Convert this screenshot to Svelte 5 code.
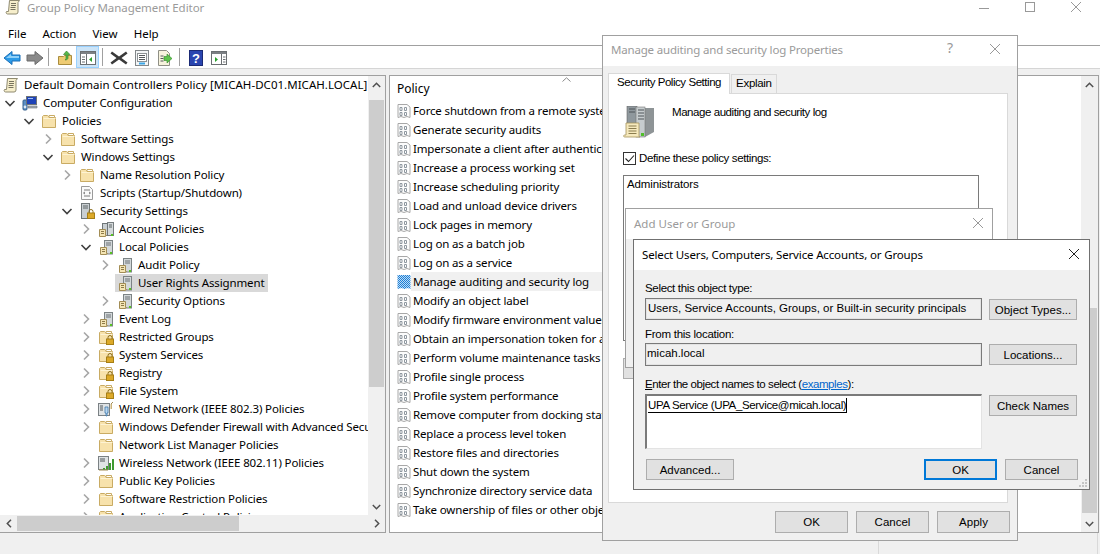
<script>
  const menus = ['File', 'Action', 'View', 'Help'];

  const tree = [
    { d: 0, c: 'open', i: 'computer', t: 'Computer Configuration' },
    { d: 1, c: 'open', i: 'folder', t: 'Policies' },
    { d: 2, c: 'closed', i: 'folder', t: 'Software Settings' },
    { d: 2, c: 'open', i: 'folder', t: 'Windows Settings' },
    { d: 3, c: 'closed', i: 'folder', t: 'Name Resolution Policy' },
    { d: 3, c: '', i: 'script', t: 'Scripts (Startup/Shutdown)' },
    { d: 3, c: 'open', i: 'security', t: 'Security Settings' },
    { d: 4, c: 'closed', i: 'servers', t: 'Account Policies' },
    { d: 4, c: 'open', i: 'server', t: 'Local Policies' },
    { d: 5, c: 'closed', i: 'server', t: 'Audit Policy' },
    { d: 5, c: '', i: 'server', t: 'User Rights Assignment', sel: true },
    { d: 5, c: 'closed', i: 'server', t: 'Security Options' },
    { d: 4, c: 'closed', i: 'server', t: 'Event Log' },
    { d: 4, c: 'closed', i: 'lockfolder', t: 'Restricted Groups' },
    { d: 4, c: 'closed', i: 'lockfolder', t: 'System Services' },
    { d: 4, c: 'closed', i: 'lockfolder', t: 'Registry' },
    { d: 4, c: 'closed', i: 'lockfolder', t: 'File System' },
    { d: 4, c: 'closed', i: 'wired', t: 'Wired Network (IEEE 802.3) Policies' },
    { d: 4, c: 'closed', i: 'folder', t: 'Windows Defender Firewall with Advanced Security' },
    { d: 4, c: '', i: 'folder', t: 'Network List Manager Policies' },
    { d: 4, c: 'closed', i: 'wireless', t: 'Wireless Network (IEEE 802.11) Policies' },
    { d: 4, c: 'closed', i: 'folder', t: 'Public Key Policies' },
    { d: 4, c: 'closed', i: 'folder', t: 'Software Restriction Policies' },
    { d: 4, c: 'closed', i: 'folder', t: 'Application Control Policies' }
  ];

  const policies = [
    'Force shutdown from a remote system',
    'Generate security audits',
    'Impersonate a client after authentication',
    'Increase a process working set',
    'Increase scheduling priority',
    'Load and unload device drivers',
    'Lock pages in memory',
    'Log on as a batch job',
    'Log on as a service',
    'Manage auditing and security log',
    'Modify an object label',
    'Modify firmware environment values',
    'Obtain an impersonation token for another user',
    'Perform volume maintenance tasks',
    'Profile single process',
    'Profile system performance',
    'Remove computer from docking station',
    'Replace a process level token',
    'Restore files and directories',
    'Shut down the system',
    'Synchronize directory service data',
    'Take ownership of files or other objects'
  ];
</script>

{#snippet lock()}
  <path d="M10 10V8.5a2 2 0 0 1 4 0V10" fill="none" stroke="#8a6d1c" />
  <rect x="8.5" y="10" width="7" height="5.5" fill="#dca928" stroke="#a67f16" />
{/snippet}

{#snippet folderShape()}
  <path d="M1.5 14.5V3.5l1-1h4l1 1h6l1 1v10z" fill="#f7e2ac" stroke="#c9ab63" />
  <path d="M8 2.5h5.5v2H8z" fill="#fff" stroke="#c9ab63" />
  <path d="M2.5 5.5h12" stroke="#fdf3d3" />
{/snippet}

{#snippet serverShape()}
  <rect x="6.5" y="1.5" width="8" height="13.5" fill="#d3d8da" stroke="#7c8385" />
  <path d="M8 4h5M8 6h5" stroke="#6a7174" />
  <rect x="12" y="13" width="2" height="2" fill="#58c322" />
  <path d="M2.5 8.5h6v6h1l-1 1h-6z" fill="#f4e5b5" stroke="#a38d55" />
  <path d="M4 10.5h3M4 12.5h3" stroke="#8d7a48" />
{/snippet}

{#snippet icon(kind)}
  <svg class="ico" viewBox="0 0 16 16" width="16" height="16">
    {#if kind === 'folder'}
      {@render folderShape()}
    {:else if kind === 'lockfolder'}
      {@render folderShape()}
      {@render lock()}
    {:else if kind === 'server'}
      {@render serverShape()}
    {:else if kind === 'servers'}
      <rect x="9.5" y="1.5" width="6" height="13" fill="#d5dadc" stroke="#777e80" />
      <path d="M11 4h3M11 6h3" stroke="#5d6467" />
      <rect x="13" y="13" width="2" height="2" fill="#58c322" />
      <rect x="4.5" y="2.5" width="5" height="12" fill="#c9cfd2" stroke="#6f7678" />
      <path d="M1.5 8.5h6v6h1l-1 1h-6z" fill="#f4e5b5" stroke="#a38d55" />
      <path d="M3 10.5h3M3 12.5h3" stroke="#8d7a48" />
    {:else if kind === 'security'}
      <rect x="2.5" y="0.5" width="8" height="15" fill="#c9cfd2" stroke="#6f7678" />
      <path d="M4 3h5M4 5h5" stroke="#5d6467" />
      {@render lock()}
    {:else if kind === 'computer'}
      <rect x="1" y="5" width="4" height="10" rx="1" fill="#5b8fc4" stroke="#36608c" />
      <rect x="4.5" y="1.5" width="10" height="8" fill="#1f43b8" stroke="#6d7378" />
      <path d="M6 3h5v1H6z" fill="#9fc0f5" />
      <path d="M6 11h9v2H6z" fill="#a4acb2" stroke="#6d7378" stroke-width=".6" />
      <circle cx="3" cy="12" r="1.4" fill="#dfe9f5" />
    {:else if kind === 'script'}
      <path d="M2.5 1.5h8l3 3v10h-11z" fill="#fafafa" stroke="#9b9b9b" />
      <path d="M5 5h6M4.5 8l1.5-1M4.5 8l1.5 1M11.5 8L10 7M11.5 8L10 9M5 11h6" stroke="#7a7a7a" fill="none" />
    {:else if kind === 'wired'}
      <rect x="0.5" y="2.5" width="11" height="12" fill="#dfe3e5" stroke="#7b8184" />
      <path d="M2 5h3M2 7h3M2 9h3" stroke="#50565a" />
      <path d="M7 6h3v6H9v3H8v-3H7z" fill="#b7d5ee" stroke="#2f6da5" stroke-width=".7" />
      <path d="M13 3l2-2" stroke="#a38d55" />
      <rect x="12.5" y="3" width="1.5" height="5" fill="#cbb37b" />
    {:else if kind === 'wireless'}
      <rect x="0.5" y="1.5" width="10" height="13" fill="#dfe3e5" stroke="#7b8184" />
      <path d="M2 4h5M2 6h5" stroke="#50565a" />
      <path d="M5 15v-2h2v2zM8 15v-4h2v4zM11 15V8h2v7zM14 15V4h2v11z" fill="#3f9a31" />
      <path d="M1 15h9" stroke="#a38d55" />
    {/if}
  </svg>
{/snippet}

{#snippet chevron(c)}
  <span class="chev">
    {#if c === 'open'}
      <svg viewBox="0 0 12 12" width="12" height="12"><path d="M1.5 4L6 8.5 10.5 4" fill="none" stroke="#404040" stroke-width="1.6" /></svg>
    {:else if c === 'closed'}
      <svg viewBox="0 0 12 12" width="12" height="12"><path d="M4 1.5L8.5 6 4 10.5" fill="none" stroke="#a6a6a6" stroke-width="1.6" /></svg>
    {/if}
  </span>
{/snippet}

{#snippet scroll()}
  <svg class="ico" viewBox="0 0 16 16" width="16" height="16">
    <path d="M4.5 1.5h10L13 3.500V13a2 2 0 0 1-2 2H2.500a1.500 1.500 0 0 1-1-2.500h2z" fill="#f6eecb" stroke="#8f8a70" />
    <path d="M6 4.500h5M6 6.500h5M5.500 8.500h5M5.500 10.500h5" stroke="#77735e" />
  </svg>
{/snippet}

{#snippet closeX(color)}
  <svg class="x" viewBox="0 0 12 12" width="12" height="12"><path d="M1 1l10 10M11 1L1 11" stroke={color} fill="none" /></svg>
{/snippet}

{#snippet arrowUp()}
  <span class="arrow"><svg viewBox="0 0 9 6" width="9" height="6"><path d="M.8 5l3.700-3.700L8.200 5" fill="none" stroke="#505050" stroke-width="1.5" /></svg></span>
{/snippet}

{#snippet arrowDown()}
  <span class="arrow"><svg viewBox="0 0 9 6" width="9" height="6"><path d="M.8 1l3.700 3.700L8.200 1" fill="none" stroke="#505050" stroke-width="1.5" /></svg></span>
{/snippet}

<div class="app">
  <header class="titlebar">
    <span class="appicon">{@render scroll()}</span>
    <span class="apptitle">Group Policy Management Editor</span>
    <div class="wincontrols">
      <svg viewBox="0 0 12 12" width="12" height="12"><path d="M1 7.500h10" stroke="#999" /></svg>
      <svg viewBox="0 0 12 12" width="12" height="12"><rect x="1.500" y="1.500" width="9" height="9" fill="none" stroke="#999" /></svg>
      {@render closeX('#999')}
    </div>
  </header>

  <nav class="menubar">
    {#each menus as m}<span>{m}</span>{/each}
  </nav>

  <div class="toolbar">
    <span class="tool">
      <svg viewBox="0 0 18 16" width="18" height="16"><path d="M9 1.500L1 8l8 6.500V11h8V5H9z" fill="#2d9be8" stroke="#1b6fb8" /><path d="M8 4L3 8h13V6H8z" fill="#8fd0f8" /></svg>
    </span>
    <span class="tool">
      <svg viewBox="0 0 18 16" width="18" height="16"><path d="M9 1.500L17 8l-8 6.500V11H1V5h8z" fill="#8a8a8a" stroke="#6a6a6a" /></svg>
    </span>
    <i class="sep first"></i>
    <span class="tool">
      <svg viewBox="0 0 16 16" width="16" height="16"><path d="M1.500 14.500v-8h5l1-1h7v9z" fill="#eecb73" stroke="#a98c3e" /><path d="M9.500 1L13 4.500h-2V8c0 1-1 2-3 2 1-1 1-1.500 1-2V4.500H6.500z" fill="#57b947" stroke="#2f7d28" stroke-width=".6" /></svg>
    </span>
    <span class="tool active">
      <svg viewBox="0 0 16 16" width="16" height="16"><rect x="0.500" y="1.500" width="15" height="13" fill="#fff" stroke="#6b6f72" /><path d="M1 2h14v2H1z" fill="#7c8084" /><path d="M6.500 4v10M2 7h3M2 9.500h3M2 12h3" stroke="#6b6f72" /><path d="M12 7v5L9 9.500z" fill="#2aa12c" /></svg>
    </span>
    <i class="sep"></i>
    <span class="tool">
      <svg viewBox="0 0 18 16" width="18" height="16"><path d="M2 1.500l7 5 7-5 1.500 2-6 4.500 6 4.500-1.500 2-7-5-7 5L.5 12.500l6-4.500-6-4.500z" fill="#3a3a3a" /></svg>
    </span>
    <span class="tool">
      <svg viewBox="0 0 16 16" width="16" height="16"><rect x="1.500" y="0.500" width="13" height="15" fill="#f3f5f6" stroke="#82878a" /><rect x="3.500" y="3.500" width="9" height="8" fill="#fff" stroke="#8d9295" /><path d="M5 5.500h6M5 7.500h6M5 9.500h6" stroke="#55595c" /><path d="M5 13.500h6" stroke="#3aa6e8" stroke-width="2" /></svg>
    </span>
    <span class="tool">
      <svg viewBox="0 0 16 16" width="16" height="16"><path d="M1.500 0.500h8l3 3v12h-11z" fill="#f7f3dd" stroke="#8f8f85" /><path d="M3.500 6h3M3.500 8.500h3M3.500 11h3" stroke="#55595c" /><path d="M10 4l5 4.500-5 4.500v-2.500H7v-4h3z" fill="#5ec24b" stroke="#2f8a2a" stroke-width=".6" /></svg>
    </span>
    <i class="sep"></i>
    <span class="tool">
      <svg viewBox="0 0 14 16" width="14" height="16"><rect x="0.500" y="0.500" width="13" height="15" fill="#2a45b0" stroke="#1b2a75" /><text x="7" y="13" font-size="13" font-weight="700" text-anchor="middle" fill="#fff" font-family="Liberation Sans, sans-serif">?</text></svg>
    </span>
    <span class="tool">
      <svg viewBox="0 0 16 16" width="16" height="16"><rect x="0.500" y="1.500" width="15" height="13" fill="#fff" stroke="#6b6f72" /><path d="M1 2h14v2H1z" fill="#7c8084" /><path d="M10.500 4v10M12 7h2.500M12 9.500h2.500M12 12h2.500" stroke="#6b6f72" /><path d="M4 7v5l3-2.500z" fill="#2aa12c" /></svg>
    </span>
  </div>

  <div class="panes">
    <section class="treepane">
      <div class="treemain">
        <div class="tree">
          <div class="row rootrow">
            {@render scroll()}
            <span class="label">Default Domain Controllers Policy [MICAH-DC01.MICAH.LOCAL]</span>
          </div>
          {#each tree as n}
            <div class="row" style="padding-left: {4 + n.d * 19}px">
              {@render chevron(n.c)}
              <span class="node" class:sel={n.sel}>
                {@render icon(n.i)}
                <span class="label">{n.t}</span>
              </span>
            </div>
          {/each}
        </div>
        <div class="vscroll">
          {@render arrowUp()}
          <div class="track tree-track"><div class="thumb"></div></div>
          {@render arrowDown()}
        </div>
      </div>
      <div class="hscroll">
        <span class="harrow"><svg viewBox="0 0 6 9" width="6" height="9"><path d="M5 .8L1.300 4.500 5 8.200" fill="none" stroke="#505050" stroke-width="1.5" /></svg></span>
        <div class="htrack"><div class="hthumb"></div></div>
        <span class="harrow"><svg viewBox="0 0 6 9" width="6" height="9"><path d="M1 .8l3.700 3.700L1 8.200" fill="none" stroke="#505050" stroke-width="1.5" /></svg></span>
      </div>
    </section>

    <section class="listpane">
      <div class="listmain">
        <div class="listhead">
          <span>Policy</span>
          <svg class="sortmark" viewBox="0 0 9 5" width="9" height="5"><path d="M.5 4.500L4.500.8l4 3.700" fill="none" stroke="#8a8a8a" /></svg>
        </div>
        {#each policies as p, idx}
          <div class="lrow">
            <svg class="ico" viewBox="0 0 14 16" width="14" height="16">
              <defs>
                <pattern id="dither" width="2" height="2" patternUnits="userSpaceOnUse">
                  <rect width="2" height="2" fill="#1f7fd6" /><rect width="1" height="1" fill="#bcdcf5" /><rect x="1" y="1" width="1" height="1" fill="#bcdcf5" />
                </pattern>
              </defs>
              {#if idx === 9}
                <path d="M.5 1h13v14l-3-1-3 1-3-1-4 1z" fill="url(#dither)" />
              {:else}
                <path d="M1 1.500h9l3 2.500v10.500l-3-1-3 1-3-1-3 1z" fill="#fcfcfc" stroke="#a8a8a8" />
                <path d="M3 4.500h2v3H3zM7.500 4.500h2v3h-2zM3 9.500h2v3H3zM7.500 9.500h2v3h-2z" fill="none" stroke="#8f98a0" />
              {/if}
            </svg>
            <span class="ltext" class:sel={idx === 9}>{p}</span>
          </div>
        {/each}
      </div>
      <div class="vscroll">
        {@render arrowUp()}
        <div class="track list-track"><div class="thumb"></div></div>
        {@render arrowDown()}
      </div>
    </section>
  </div>

  <footer class="status">
    <span class="cell wide"></span>
    <span class="cell narrow"></span>
  </footer>

  <!-- stacked dialogs -->
  <div class="dialog props">
    <div class="dtitle">
      <span>Manage auditing and security log Properties</span>
      <span class="help">?</span>
      {@render closeX('#999')}
    </div>
    <div class="tabs">
      <span class="tab on">Security Policy Setting</span>
      <span class="tab">Explain</span>
    </div>
    <div class="tabpanel">
      <div class="policyhead">
        <svg viewBox="0 0 32 32" width="32" height="32">
          <rect x="4" y="0" width="10" height="24" fill="#8f989d" stroke="#666" stroke-width=".6" />
          <path d="M22 2h9v24l-9 5z" fill="#8e9496" />
          <rect x="13" y="1" width="9" height="30" fill="#c6ccce" stroke="#777" stroke-width=".6" />
          <path d="M6 3h6M6 6h6M15 4h6M15 7h6M15 10h6M15 13h6" stroke="#4f5558" />
          <rect x="18" y="27" width="3" height="3" fill="#4fc02a" />
          <path d="M3 17h13v12c0 1 0 2 1 2H2c-2 0-2-2 0-2h1z" fill="#f6e9bd" stroke="#a5925c" stroke-width=".8" />
          <path d="M5.500 20h8M5.500 22.500h8M5.500 25h8M5.500 27.500h8" stroke="#8a7c4e" />
        </svg>
        <span class="policyname">Manage auditing and security log</span>
      </div>
      <div class="define">
        <span class="check">
          <svg viewBox="0 0 13 13" width="13" height="13"><path d="M2.500 6.500l3 3 5.500-6" fill="none" stroke="#222" stroke-width="1.1" /></svg>
        </span>
        <span>Define these policy settings:</span>
      </div>
      <div class="listbox">Administrators</div>
      <button class="btn addbtn" aria-label="Add"></button>
    </div>
    <div class="dfoot">
      <button class="btn">OK</button>
      <button class="btn">Cancel</button>
      <button class="btn">Apply</button>
    </div>
  </div>

  <div class="dialog adduser">
    <div class="dtitle">
      <span>Add User or Group</span>
      {@render closeX('#999')}
    </div>
  </div>

  <div class="dialog select">
    <div class="dtitle active">
      <span>Select Users, Computers, Service Accounts, or Groups</span>
      {@render closeX('#222')}
    </div>
    <div class="selbody">
      <div class="selgrid">
        <span class="cap first">Select this object type:</span>
        <div class="rbox type">Users, Service Accounts, Groups, or Built-in security principals</div>
        <button class="btn side">Object Types...</button>

        <span class="cap second">From this location:</span>
        <div class="rbox loc">micah.local</div>
        <button class="btn side">Locations...</button>

        <span class="cap third"><u>E</u>nter the object names to select (<a href="#examples">examples</a>):</span>
        <div class="names"><span class="entry">UPA Service (UPA_Service@micah.local)</span></div>
        <button class="btn side">Check Names</button>
      </div>
      <div class="selfoot">
        <button class="btn">Advanced...</button>
        <span class="grow"></span>
        <button class="btn small primary">OK</button>
        <button class="btn small">Cancel</button>
      </div>
    </div>
    <svg class="grip" viewBox="0 0 10 10" width="10" height="10">
      <path d="M7 1h2v2H7zM4 4h2v2H4zM7 4h2v2H7zM1 7h2v2H1zM4 7h2v2H4zM7 7h2v2H7z" fill="#c4c4c4" />
    </svg>
  </div>
</div>

<style>
  :global(body) { background: #fff; overflow: hidden; }

  .app {
    position: relative;
    width: 1100px;
    height: 554px;
    overflow: hidden;
    background: #fff;
    display: flex;
    flex-direction: column;
    font-family: "Noto Sans", sans-serif;
    font-size: 11.5px;
    color: #000;
  }
  .ico { flex: none; display: block; }

  .titlebar { height: 14px; display: flex; align-items: center; flex: none; padding-left: 5px; }
  .appicon { width: 22px; }
  .apptitle { color: #9a9a9a; font-size: 11.5px; letter-spacing: -.06px; }
  .wincontrols { margin-left: auto; display: flex; gap: 34px; padding-right: 18px; }

  .menubar { height: 32px; flex: none; display: flex; align-items: flex-end; gap: 16px; padding: 0 0 3px 8px; box-sizing: border-box; border-bottom: 1px solid #a0a0a0; font-size: 11.5px; line-height: 16px; }

  .toolbar { height: 23px; flex: none; display: flex; align-items: center; border-bottom: 1px solid #d5d5d5; box-sizing: border-box; }
  .tool { width: 23px; height: 22px; display: flex; align-items: center; justify-content: center; box-sizing: border-box; padding-top: 2px; }
  .tool.active { background: #cce4f7; border: 1px solid #99d1ff; }
  .sep { width: 1px; height: 18px; background: #a0a0a0; margin: 0 4px 0 3px; }
  .sep.first { margin-left: 2px; }

  .panes { flex: 1; min-height: 0; display: flex; gap: 3px; background: #f0f0f0; padding-top: 6px; }
  .treepane { width: 385px; flex: none; border: 1px solid #a0a0a0; border-left: none; background: #fff; display: flex; flex-direction: column; }
  .treemain { flex: 1; min-height: 0; display: flex; }
  .tree { flex: 1; min-width: 0; overflow: hidden; white-space: nowrap; letter-spacing: -.12px; }
  .row { height: 18px; display: flex; align-items: center; line-height: 18px; }
  .rootrow { padding-left: 3px; gap: 5px; letter-spacing: .03px; }
  .chev { width: 12px; height: 12px; flex: none; margin-right: 4px; }
  .chev svg { display: block; }
  .node { display: inline-flex; align-items: center; gap: 5px; padding: 0 4px 0 2px; height: 18px; }
  .node.sel { background: #d9d9d9; }

  .vscroll { width: 17px; flex: none; background: #f0f0f0; display: flex; flex-direction: column; align-items: center; }
  .arrow { height: 17px; flex: none; display: flex; align-items: center; justify-content: center; }
  .track { flex: 1; width: 15px; display: flex; flex-direction: column; }
  .thumb { background: #cdcdcd; }
  .tree-track { padding-top: 7px; }
  .tree-track .thumb { height: 287px; }
  .list-track { justify-content: flex-end; padding-bottom: 2px; }
  .list-track .thumb { height: 205px; }

  .hscroll { height: 17px; flex: none; display: flex; background: #f0f0f0; }
  .harrow { width: 17px; flex: none; display: flex; align-items: center; justify-content: center; }
  .htrack { flex: 1; padding: 1px 0; display: flex; }
  .hthumb { width: 222px; background: #cdcdcd; }

  .listpane { flex: 1; min-width: 0; margin-right: 1px; border: 1px solid #a0a0a0; background: #fff; display: flex; }
  .listmain { flex: 1; min-width: 0; overflow: hidden; white-space: nowrap; letter-spacing: -.15px; }
  .listhead { position: relative; height: 25px; padding-left: 7px; display: flex; align-items: center; font-size: 12px; letter-spacing: 0; }
  .sortmark { position: absolute; left: 172px; top: 1px; }
  .lrow { height: 19px; display: flex; align-items: center; padding-left: 7px; }
  .ltext { padding: 0 2px; line-height: 19px; flex: 1; }
  .ltext.sel { background: #f0f0f0; }

  .status { height: 21px; flex: none; display: flex; background: #f0f0f0; }
  .cell { display: block; border-right: 1px solid #d9d9d9; }
  .wide { width: 878px; }
  .narrow { width: 218px; }

  .dialog {
    position: absolute;
    box-sizing: border-box;
    border: 1px solid #a0a0a0;
    background: #f0f0f0;
    display: flex;
    flex-direction: column;
    font-family: "Liberation Sans", sans-serif;
    font-size: 11.5px;
  }
  .dtitle { height: 30px; box-sizing: border-box; flex: none; background: #fff; display: flex; align-items: center; padding: 0 16px 0 8px; font-family: "Noto Sans", sans-serif; font-size: 11.5px; color: #9a9a9a; gap: 36px; }
  .dtitle span:first-child { flex: 1; }
  .dtitle.active { color: #000; }
  .help { font-size: 14px; color: #999; margin-top: -3px; }
  .x { flex: none; }

  .props { left: 602px; top: 35px; width: 416px; height: 506px; }
  .props .dtitle { padding-bottom: 4px; letter-spacing: -.18px; }
  .tabs { display: flex; align-items: flex-end; padding: 7px 0 0 5px; height: 27px; box-sizing: border-box; flex: none; }
  .tab { height: 18px; line-height: 17px; padding: 0 4px; border: 1px solid #d9d9d9; border-bottom: none; background: #f0f0f0; margin-left: 1px; letter-spacing: -.3px; }
  .tab.on { height: 20px; line-height: 17px; background: #fff; padding: 0 8px; margin-left: 0; position: relative; top: 1px; letter-spacing: -.45px; }
  .tabpanel { width: 400px; height: 410px; box-sizing: border-box; margin-left: 5px; border: 1px solid #d9d9d9; background: #fff; padding: 12px 0 0 14px; }
  .policyhead { display: flex; gap: 17px; height: 32px; line-height: 14px; }
  .policyname { margin-top: -1px; letter-spacing: -.44px; }
  .define { display: flex; align-items: center; gap: 3px; margin-top: 13px; height: 14px; letter-spacing: -.38px; }
  .check { width: 13px; height: 13px; border: 1px solid #333; box-sizing: border-box; display: flex; align-items: center; justify-content: center; }
  .check svg { flex: none; }
  .listbox { width: 356px; height: 166px; box-sizing: border-box; margin-top: 10px; border: 1px solid #7a7a7a; padding: 2px 3px; letter-spacing: -.14px; }
  .addbtn { display: block; margin-top: 17px; width: 120px; height: 21px; }
  .dfoot { display: flex; justify-content: flex-end; gap: 8px; padding: 8px 7px 0 0; }
  .dfoot .btn { width: 73px; height: 22px; }

  .btn { font: inherit; color: #000; background: #e1e1e1; border: 1px solid #adadad; padding: 0; border-radius: 0; box-sizing: border-box; }

  .adduser { left: 625px; top: 208px; width: 368px; height: 160px; }
  .adduser .dtitle { padding: 0 8px 2px 8px; }

  .select { left: 633px; top: 239px; width: 457px; height: 251px; border-color: #707070; }
  .select .dtitle { font-size: 11.5px; padding: 0 9px 2px 8px; letter-spacing: -.15px; }
  .selbody { flex: 1; padding: 10px 11px 0; }
  .selgrid { display: grid; grid-template-columns: 337px 88px; column-gap: 7px; }
  .cap { grid-column: 1 / 3; line-height: 16px; margin-bottom: 2px; }
  .cap.first { letter-spacing: -.33px; }
  .cap.second { margin-top: 6px; margin-bottom: 1px; letter-spacing: -.26px; }
  .cap.third { margin-top: 10px; letter-spacing: -.43px; }
  .cap a { color: #0066cc; }
  .rbox { box-sizing: border-box; border: 1px solid #7a7a7a; box-shadow: 0 0 0 1px #e3e3e3 inset; padding: 0 2px; line-height: 18px; }
  .rbox.type { height: 22px; }
  .rbox.loc { height: 23px; padding-left: 1px; }
  .names { box-sizing: border-box; height: 55px; background: #fff; border: 1px solid #e3e3e3; border-top: 2px solid #7a7a7a; border-left: 2px solid #7a7a7a; padding: 2px 2px 0 1px; line-height: 14px; letter-spacing: -.35px; }
  .entry { border-bottom: 1px solid #000; border-right: 1px solid #000; display: inline-block; }
  .side { height: 21px; align-self: start; margin-top: 1px; }
  .selfoot { display: flex; gap: 8px; margin-top: 10px; padding-left: 1px; }
  .selfoot .btn { width: 88px; height: 21px; }
  .selfoot .btn.small { width: 73px; }
  .selfoot .btn.primary { border: 2px solid #0078d7; }
  .grow { flex: 1; }
  .grip { position: absolute; right: 1px; bottom: 1px; }
</style>
